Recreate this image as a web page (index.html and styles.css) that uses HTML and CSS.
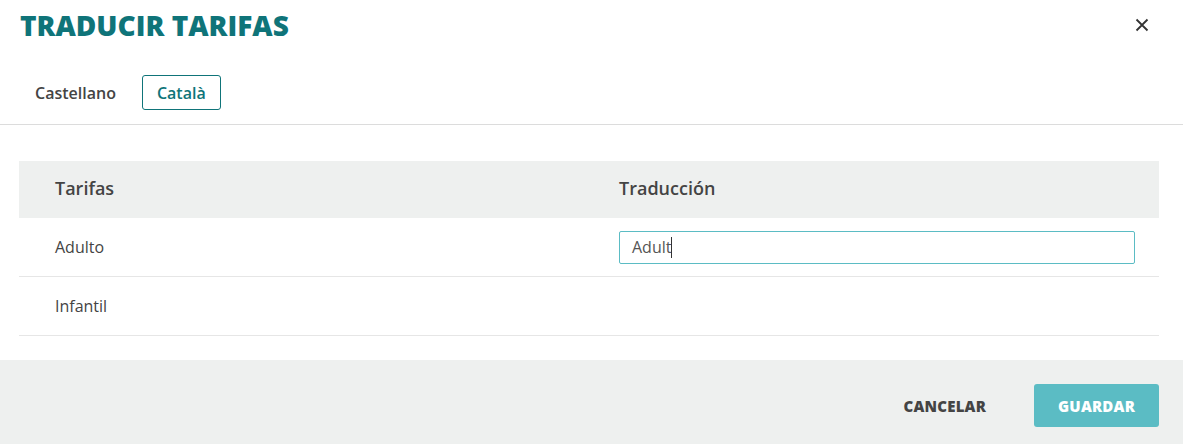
FILE: index.html
```html
<!DOCTYPE html>
<html lang="es">
<head>
<meta charset="utf-8">
<title>Traducir tarifas</title>
<link rel="stylesheet" href="styles.css">
</head>
<body>
<div class="modal">
  <header class="modal-head">
    <h1 class="title">TRADUCIR TARIFAS</h1>
    <button class="close" aria-label="Cerrar">
      <svg width="14" height="14" viewBox="0 0 14 14"><path d="M1.5 1.5 L12.5 12.5 M12.5 1.5 L1.5 12.5" stroke="#333" stroke-width="1.8" fill="none"/></svg>
    </button>
  </header>
  <nav class="tabs">
    <button class="tab">Castellano</button>
    <button class="tab active">Català</button>
  </nav>
  <section class="body">
    <div class="table">
      <div class="row head">
        <div class="cell">Tarifas</div>
        <div class="cell">Traducción</div>
      </div>
      <div class="row">
        <div class="cell">Adulto</div>
        <div class="cell"><div class="input">Adult<span class="caret"></span></div></div>
      </div>
      <div class="row">
        <div class="cell">Infantil</div>
        <div class="cell"></div>
      </div>
    </div>
  </section>
  <footer class="modal-foot">
    <button class="btn-text">CANCELAR</button>
    <button class="btn-primary">GUARDAR</button>
  </footer>
</div>
</body>
</html>
```
FILE: styles.css
```css
* { box-sizing: border-box; }
html, body { margin: 0; padding: 0; background: #fff; }
body { font-family: "Open Sans", "Noto Sans", sans-serif; color: #444; }
.modal { width: 1183px; height: 444px; display: flex; flex-direction: column; }
.modal-head { display: flex; align-items: center; justify-content: space-between; padding: 0 34px 0 20px; height: 50px; }
.title { margin: 0; font-family: "Open Sans", "DejaVu Sans", sans-serif; font-weight: 800; font-size: 28px; color: #0f7479; letter-spacing: 0; line-height: 1; }
.close { border: 0; background: none; padding: 0; width: 14px; height: 14px; display: flex; cursor: pointer; }
.tabs { display: flex; align-items: center; gap: 11px; padding: 25px 0 14px 20px; border-bottom: 1px solid #dcdcdc; }
.tab { font-family: inherit; font-size: 16px; font-weight: 600; color: #444; background: none; border: 1px solid transparent; border-radius: 3px; height: 35px; padding: 0 14px; cursor: pointer; }
.tab.active { color: #0f7479; border-color: #0f7479; }
.body { padding: 36px 24px 24px 19px; flex: 1; }
.row { display: grid; grid-template-columns: 564px 1fr; align-items: center; height: 59px; border-bottom: 1px solid #e6e6e6; }
.row.head { background: #eef0ef; height: 57px; border-bottom: 0; font-weight: 600; color: #444; padding-bottom: 3px; }
.cell { padding-left: 36px; font-size: 16px; }
.row.head .cell { font-size: 18px; }
.cell:last-child { padding-right: 24px; }
.input { height: 33px; border: 1px solid #5bbcc4; border-radius: 2px; padding: 0 12px; display: flex; align-items: center; font-size: 16px; color: #555; }
.caret { display: inline-block; width: 1px; height: 21px; background: #333; }
.modal-foot { background: #eef0ef; height: 84px; display: flex; justify-content: flex-end; align-items: flex-start; padding: 24px 24px 0 0; gap: 24px; }
.btn-text, .btn-primary { font-family: "Open Sans", "DejaVu Sans", sans-serif; font-weight: 800; font-size: 15px; height: 43px; padding: 0 24px; border: 0; border-radius: 3px; cursor: pointer; letter-spacing: 0.2px; }
.btn-text { background: none; color: #444; }
.btn-primary { background: #5bbcc4; color: #fff; }
```
